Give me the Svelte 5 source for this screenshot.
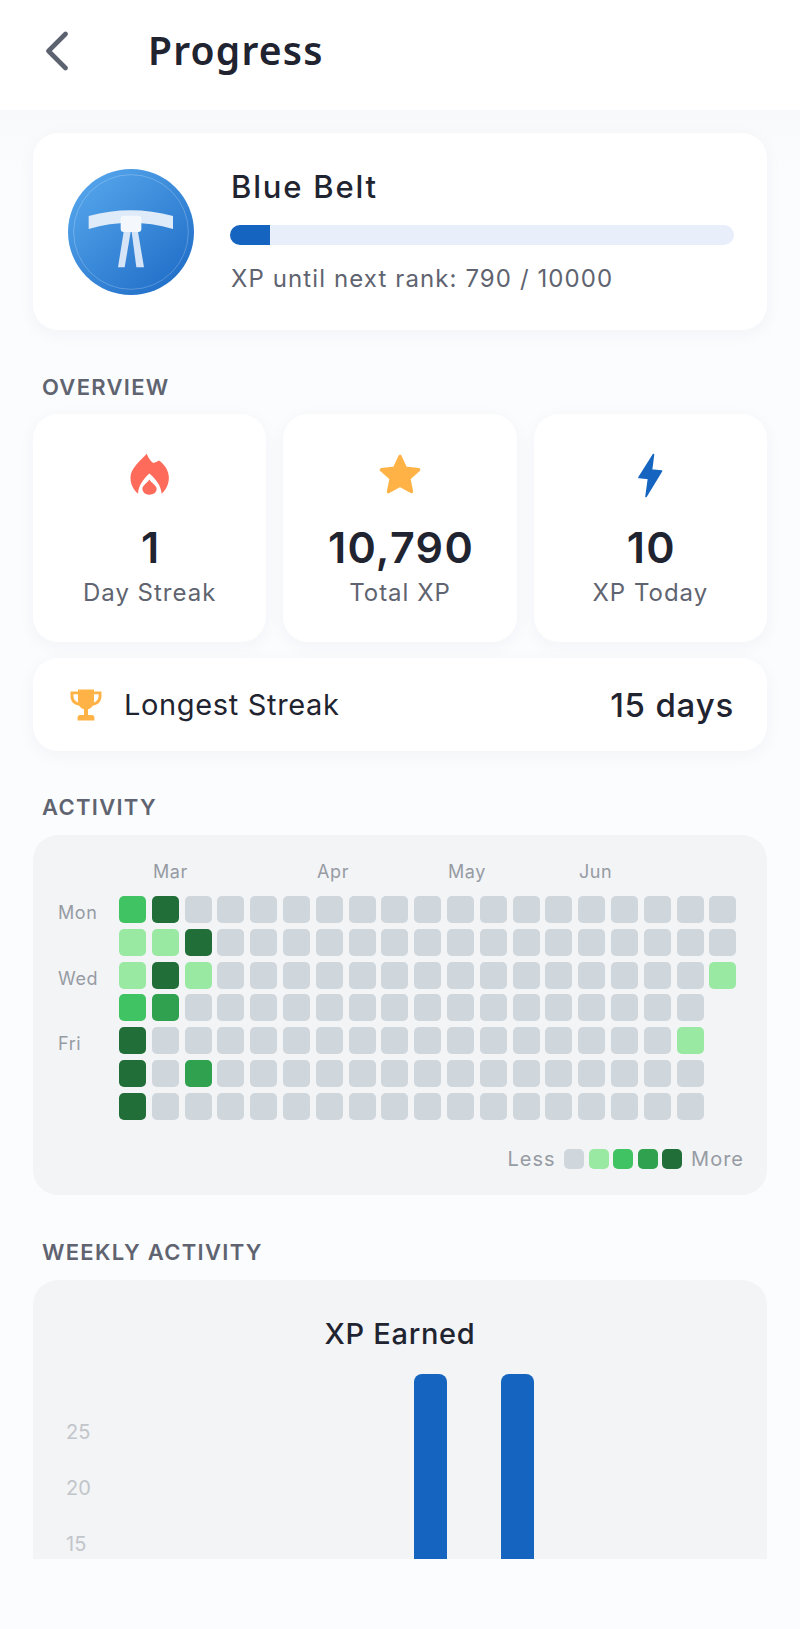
<script>
  const months = [
    { name: 'Mar', width: 164 },
    { name: 'Apr', width: 131 },
    { name: 'May', width: 131 },
    { name: 'Jun', width: 100 }
  ];
  const days = ['Mon', '', 'Wed', '', 'Fri', '', ''];
  const special = {
    0: [2, 1, 1, 2, 4, 4, 4],
    1: [4, 1, 4, 3, 0, 0, 0],
    2: [0, 4, 1, 0, 0, 3, 0],
    17: [0, 0, 0, 0, 1, 0, 0],
    18: [0, 0, 1]
  };
  const cells = [];
  for (let c = 0; c < 19; c++) {
    const col = special[c] ?? [0, 0, 0, 0, 0, 0, 0];
    for (let r = 0; r < 7; r++) {
      cells.push(r < col.length ? col[r] : -1);
    }
  }
  const stats = [
    { icon: 'flame', value: '1', label: 'Day Streak' },
    { icon: 'star', value: '10,790', label: 'Total XP' },
    { icon: 'bolt', value: '10', label: 'XP Today' }
  ];
  const weekly = [0, 0, 0, 1, 1, 0, 0];
  const axis = [25, 20, 15];
</script>

<div class="screen">
  <header class="topbar">
    <svg class="back" width="24" height="40" viewBox="0 0 24 40" aria-hidden="true">
      <path d="M19.5 3 L2.5 20 L19.5 37" fill="none" stroke="#5c6270" stroke-width="4.6" stroke-linecap="round" stroke-linejoin="round" />
    </svg>
    <h1>Progress</h1>
  </header>

  <main class="content">
    <section class="card rank">
      <svg class="badge" width="126" height="126" viewBox="55 57 378 378" aria-hidden="true">
        <defs>
          <linearGradient id="blue" x1="0.15" y1="0.1" x2="0.85" y2="0.9">
            <stop offset="0" stop-color="#52a3ea" />
            <stop offset="1" stop-color="#2270c9" />
          </linearGradient>
        </defs>
        <circle cx="244" cy="246" r="189" fill="url(#blue)" />
        <circle cx="244" cy="246" r="172" fill="none" stroke="#ffffff" stroke-opacity="0.22" stroke-width="3" />
        <path d="M117 198 Q243 164 370 198 L370 237 Q243 200 117 237 Z" fill="#dfebf9" />
        <path d="M222 245 H243 L225 352 H205 Z" fill="#d5e5f7" />
        <path d="M246 245 H265 L283 352 H260 Z" fill="#d5e5f7" />
        <rect x="213" y="197" width="62" height="49" rx="9" fill="#f4f8fd" />
      </svg>
      <div class="rank-info">
        <div class="rank-name">Blue Belt</div>
        <div class="bar"><div class="fill" style="width: 7.9%"></div></div>
        <div class="rank-xp">XP until next rank: 790 / 10000</div>
      </div>
    </section>

    <h2 class="label first">OVERVIEW</h2>
    <div class="stats">
      {#each stats as s}
        <div class="card stat">
          <div class="stat-icon">
            {#if s.icon === 'flame'}
              <svg width="40" height="43" viewBox="390 160 120 130" aria-hidden="true">
                <path fill="#ff6b5a" d="M440 162 C445 175 452 185 460 190 C466 190 472 186 477 183 C495 195 507 215 507 235 C507 255 498 272 485 283 C484 262 470 240 448 222 C428 240 414 262 414 283 C400 272 391 255 391 235 C391 205 420 185 440 162 Z" />
                <path fill="#ff6b5a" d="M448 240 C456 252 470 258 470 268 C470 280 460 286 448 286 C436 286 427 278 427 268 C427 258 440 252 448 240 Z" />
              </svg>
            {:else if s.icon === 'star'}
              <svg width="44" height="43" viewBox="0 0 44 43" aria-hidden="true">
                <path fill="#ffb347" stroke="#ffb347" stroke-width="3.4" stroke-linejoin="round" d="M22 3.4 L27.4 15.2 L40.6 16.8 L30.8 25.6 L33.5 38.6 L22 32.2 L10.5 38.6 L13.2 25.6 L3.4 16.8 L16.6 15.2 Z" />
              </svg>
            {:else}
              <svg width="26" height="45" viewBox="0 0 26 45" aria-hidden="true">
                <path fill="#1565c0" stroke="#1565c0" stroke-width="1.6" stroke-linejoin="round" d="M16.5 1.5 L2 24.5 L11.5 25.5 L9 43.5 L24.5 18 L14.5 17 Z" />
              </svg>
            {/if}
          </div>
          <div class="stat-value">{s.value}</div>
          <div class="stat-label">{s.label}</div>
        </div>
      {/each}
    </div>

    <section class="card longest">
      <svg class="trophy" width="32" height="32" viewBox="0 0 32 32" aria-hidden="true">
        <path fill="#ffb347" d="M8 0.5 H24 V2.5 H31.5 V7 C31.5 12.5 28 16 23 16.6 C21.8 18.6 20 19.8 18 20.3 V26 H22 C23.2 26 24 26.8 24.4 28 V31.5 H7.6 V28 C8 26.8 8.8 26 10 26 H14 V20.3 C12 19.8 10.2 18.6 9 16.6 C4 16 0.5 12.5 0.5 7 V2.5 H8 Z M8 5.2 H3.4 V7 C3.4 10 5.2 12.6 8.2 13.4 C8 12.4 8 11.4 8 10.4 Z M24 5.2 V10.4 C24 11.4 24 12.4 23.8 13.4 C26.8 12.6 28.6 10 28.6 7 V5.2 Z" fill-rule="evenodd" />
      </svg>
      <span class="longest-label">Longest Streak</span>
      <span class="longest-value">15 days</span>
    </section>

    <h2 class="label second">ACTIVITY</h2>
    <section class="panel activity">
      <div class="months">
        {#each months as m}
          <span class="month" style="width: {m.width}px">{m.name}</span>
        {/each}
      </div>
      <div class="heat">
        <div class="days">
          {#each days as d}
            <span class="day">{d}</span>
          {/each}
        </div>
        <div class="grid">
          {#each cells as c}
            {#if c >= 0}
              <span class="cell l{c}"></span>
            {:else}
              <span></span>
            {/if}
          {/each}
        </div>
      </div>
      <div class="legend">
        <span class="legend-text less">Less</span>
        {#each [0, 1, 2, 3, 4] as l}
          <span class="swatch l{l}"></span>
        {/each}
        <span class="legend-text more">More</span>
      </div>
    </section>

    <h2 class="label third">WEEKLY ACTIVITY</h2>
    <section class="panel chart">
      <div class="chart-title">XP Earned</div>
      <div class="plot">
        <div class="axis">
          {#each axis as a}
            <span class="tick">{a}</span>
          {/each}
        </div>
        <div class="bars">
          {#each weekly as w}
            <div class="slot">
              {#if w}<div class="column"></div>{/if}
            </div>
          {/each}
        </div>
      </div>
    </section>
  </main>
</div>

<style>
  :global(body) {
    margin: 0;
    background: #fbfcfe;
  }
  .screen {
    width: 800px;
    height: 1629px;
    background: #fbfcfe;
    font-family: Inter, "Noto Sans", sans-serif;
    color: #1f2430;
    overflow: hidden;
  }
  .topbar {
    height: 110px;
    box-sizing: border-box;
    background: #ffffff;
    display: flex;
    align-items: center;
    padding: 0 0 10px 46px;
  }
  .back {
    flex: none;
    margin-top: 2px;
  }
  h1 {
    margin: 0 0 0 78px;
    font-family: "Noto Sans", sans-serif;
    font-size: 39px;
    font-weight: 600;
    letter-spacing: 1.2px;
    line-height: 44px;
    color: #1f2430;
  }
  .content {
    height: 1449px;
    box-sizing: border-box;
    padding: 23px 33px 0;
    overflow: hidden;
    background: linear-gradient(#f8f9fb, #fbfcfe 60px);
  }
  .card {
    background: #ffffff;
    border-radius: 25px;
    box-shadow: 0 4px 18px rgba(40, 50, 70, 0.045);
  }
  .rank {
    height: 197px;
    box-sizing: border-box;
    display: flex;
    align-items: center;
    padding: 0 33px 0 35px;
  }
  .badge {
    flex: none;
    margin-right: 36px;
    margin-top: 1px;
  }
  .rank-info {
    flex: 1;
    min-width: 0;
    padding-top: 2px;
  }
  .rank-name {
    font-size: 31px;
    font-weight: 500;
    line-height: 36px;
    letter-spacing: 1.8px;
    margin: -3px 0 0 1px;
  }
  .bar {
    height: 20px;
    border-radius: 10px;
    background: #e8eefa;
    overflow: hidden;
    margin-top: 20px;
  }
  .fill {
    height: 100%;
    background: #1565c0;
  }
  .rank-xp {
    font-size: 24px;
    line-height: 30px;
    letter-spacing: 1.1px;
    color: #5f6470;
    margin: 19px 0 0 1px;
  }
  .label {
    margin: 0 0 0 9px;
    font-size: 22px;
    font-weight: 600;
    line-height: 26px;
    letter-spacing: 1.3px;
    color: #5f6470;
  }
  .label.first {
    margin-top: 44px;
    margin-bottom: 14px;
  }
  .label.second {
    margin-top: 43px;
    margin-bottom: 15px;
  }
  .label.third {
    margin-top: 44px;
    margin-bottom: 15px;
  }
  .stats {
    display: grid;
    grid-template-columns: repeat(3, 1fr);
    gap: 17px;
  }
  .stat {
    height: 228px;
    box-sizing: border-box;
    padding-top: 39px;
    display: flex;
    flex-direction: column;
    align-items: center;
  }
  .stat-icon {
    height: 46px;
    display: flex;
    align-items: flex-start;
    justify-content: center;
  }
  .stat-value {
    margin-top: 23px;
    padding-left: 2px;
    font-size: 43px;
    font-weight: 600;
    line-height: 50px;
    letter-spacing: 1.3px;
  }
  .stat-label {
    margin-top: 6px;
    font-size: 24px;
    line-height: 30px;
    letter-spacing: 1px;
    color: #5f6470;
  }
  .longest {
    margin-top: 16px;
    height: 93px;
    box-sizing: border-box;
    display: flex;
    align-items: center;
    padding: 0 33px 0 37px;
  }
  .trophy {
    flex: none;
    margin-right: 22px;
  }
  .longest-label {
    flex: 1;
    font-size: 29px;
    line-height: 36px;
    letter-spacing: 0.65px;
  }
  .longest-value {
    font-size: 33px;
    font-weight: 500;
    line-height: 38px;
    letter-spacing: 0.8px;
  }
  .panel {
    background: #f2f4f6;
    border-radius: 25px;
  }
  .activity {
    height: 360px;
    box-sizing: border-box;
    padding: 26px 25px 0;
  }
  .months {
    display: flex;
    padding-left: 95px;
    height: 22px;
  }
  .month {
    font-size: 18px;
    line-height: 22px;
    letter-spacing: 0.6px;
    color: #979ba3;
  }
  .heat {
    display: flex;
    margin-top: 13px;
  }
  .days {
    width: 61px;
    flex: none;
    display: grid;
    grid-template-rows: repeat(7, 27px);
    row-gap: 5.8px;
    padding-top: 3px;
    height: 224px;
    box-sizing: border-box;
  }
  .day {
    font-size: 18px;
    line-height: 27px;
    letter-spacing: 0.6px;
    color: #979ba3;
  }
  .grid {
    display: grid;
    grid-auto-flow: column;
    grid-template-rows: repeat(7, 27px);
    grid-auto-columns: 27px;
    gap: 5.8px;
  }
  .cell {
    border-radius: 5px;
  }
  .swatch {
    width: 20px;
    height: 20px;
    border-radius: 5px;
    flex: none;
  }
  .l0 { background: #cfd6dc; }
  .l1 { background: #99e9a3; }
  .l2 { background: #40c463; }
  .l3 { background: #30a14e; }
  .l4 { background: #216e39; }
  .legend {
    display: flex;
    align-items: center;
    justify-content: flex-end;
    gap: 4.6px;
    margin: 28px -2px 0 0;
  }
  .legend-text {
    font-size: 20px;
    line-height: 22px;
    letter-spacing: 1px;
    color: #979ba3;
  }
  .less { margin-right: 4px; }
  .more { margin-left: 4px; }
  .chart {
    height: 400px;
    box-sizing: border-box;
    padding: 37px 33px 0;
  }
  .chart-title {
    text-align: center;
    font-size: 29px;
    font-weight: 500;
    line-height: 34px;
    letter-spacing: 0.7px;
    color: #1f2430;
  }
  .plot {
    display: flex;
    margin-top: 23px;
  }
  .axis {
    width: 60px;
    flex: none;
    padding-top: 45px;
    display: flex;
    flex-direction: column;
    gap: 30px;
  }
  .tick {
    font-size: 20px;
    line-height: 26px;
    color: #c2c5ca;
  }
  .bars {
    flex: 1;
    display: grid;
    grid-template-columns: repeat(7, 1fr);
    margin-left: 2px;
  }
  .slot {
    display: flex;
    justify-content: center;
    height: 300px;
  }
  .column {
    width: 33px;
    height: 300px;
    background: #1565c0;
    border-radius: 8px 8px 0 0;
  }
</style>
